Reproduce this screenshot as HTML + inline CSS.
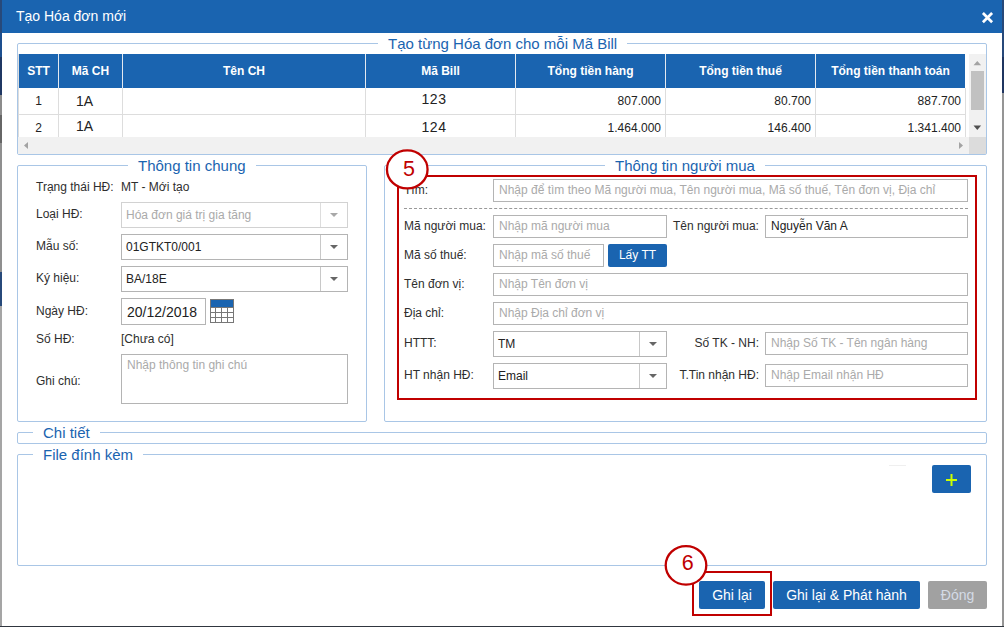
<!DOCTYPE html>
<html lang="vi">
<head>
<meta charset="utf-8">
<title>Tạo Hóa đơn mới</title>
<style>
*{box-sizing:border-box;margin:0;padding:0}
html,body{width:1004px;height:627px;overflow:hidden}
body{position:relative;background:#9b9b9b;font-family:"Liberation Sans",Arial,sans-serif;font-size:12px;color:#222}
.abs{position:absolute}
#bgL{left:0;top:0;width:2px;height:627px;background:linear-gradient(#27497a 0,#27497a 33px,#1d4f8f 33px,#1d4f8f 57px,#1f3763 57px,#1f3763 95px,#8c8c8c 95px,#8c8c8c 115px,#666 115px,#666 143px,#8f8f8f 143px,#8f8f8f 272px,#27497a 272px,#27497a 306px,#a5a5a5 306px,#a5a5a5 627px)}
#bgR{left:1002px;top:0;width:2px;height:627px;background:linear-gradient(#27497a 0,#27497a 57px,#1f3560 57px,#1f3560 93px,#959595 93px,#959595 627px)}
#bot{left:0;top:626px;width:1004px;height:1px;background:#30363f}
#dlg{left:2px;top:0;width:1000px;height:626px;background:#fff}
#title{left:0;top:0;width:1000px;height:33px;background:#1a64b0;color:#fff;font-size:14px;line-height:33px;padding-left:14px}
.fs{position:absolute;border:1px solid #a9c6e6;border-radius:2px}
.lg{position:absolute;background:#fff;color:#1a64b0;font-size:15px;line-height:18px;white-space:nowrap;padding:0 10px}
.lbl{position:absolute;white-space:nowrap;line-height:14px;font-size:12px;color:#2e2e2e}
.inp{position:absolute;border:1px solid #b4b4b4;background:#fff;height:23px;line-height:21px;padding-left:5px;font-size:12px;color:#222;white-space:nowrap;overflow:hidden}
.sel{position:absolute;border:1px solid #b4b4b4;background:#fff;height:26px;line-height:24px;padding-left:4px;font-size:12px;color:#222;white-space:nowrap;overflow:hidden}
.sel i{position:absolute;right:0;top:0;width:27px;height:100%;border-left:1px solid #c8c8c8}
.sel i:after{content:"";position:absolute;left:9px;top:10px;border-left:4px solid transparent;border-right:4px solid transparent;border-top:4px solid #666}
.btn{position:absolute;background:#1a64b0;color:#fff;border-radius:2px;text-align:center;font-size:14px;height:28px;line-height:28px;white-space:nowrap}
.th{position:absolute;top:0;height:34px;line-height:34px;color:#fff;font-weight:bold;font-size:12px;text-align:center;border-right:1px solid #e4e9f0;white-space:nowrap}
.td{position:absolute;height:27px;line-height:27px;font-size:12px;border-right:1px solid #ddd;border-bottom:1px solid #ddd;text-align:center;white-space:nowrap}
.r{text-align:right;padding-right:4px}
.ph{color:#aaa}
.dis i:after{border-top-color:#a8a8a8}
.circ{position:absolute;width:42px;height:42px;border:2px solid #b01217;border-radius:50%;background:#fff;color:#b01217;font-size:20px;line-height:38px;text-align:center}
.rbox{position:absolute;border:2px solid #c00000}
</style>
</head>
<body>
<div class="abs" id="bgL"></div><div class="abs" id="bgR"></div>
<div class="abs" id="dlg">
  <div class="abs" id="title">Tạo Hóa đơn mới</div>
  <svg class="abs" style="left:979px;top:11px" width="14" height="14" viewBox="0 0 14 14"><path d="M1.9 2L11.1 11.2M11.1 2L1.9 11.2" stroke="#fff" stroke-width="2.7" fill="none"/></svg>

  <!-- fieldset 1: table -->
  <div class="fs" style="left:15px;top:43px;width:970px;height:112px"></div>
  <div class="lg" style="left:376px;top:35px">Tạo từng Hóa đơn cho mỗi Mã Bill</div>
  <div class="abs" id="grid" style="left:16px;top:54px;width:951px;height:83px;overflow:hidden;border-left:1px solid #ddd">
    <div class="abs" style="left:0;top:0;width:946px;height:34px;background:#1a64b0"></div>
    <div class="th" style="left:0;width:40px">STT</div>
    <div class="th" style="left:40px;width:64px">Mã CH</div>
    <div class="th" style="left:104px;width:243px">Tên CH</div>
    <div class="th" style="left:347px;width:150px">Mã Bill</div>
    <div class="th" style="left:497px;width:150px">Tổng tiền hàng</div>
    <div class="th" style="left:647px;width:150px">Tổng tiền thuế</div>
    <div class="th" style="left:797px;width:149px;border-right:0">Tổng tiền thanh toán</div>

    <div class="td" style="top:34px;left:0;width:40px">1</div>
    <div class="td" style="top:34px;left:40px;width:64px;font-size:14px;text-align:left;padding-left:17px">1A</div>
    <div class="td" style="top:34px;left:104px;width:243px"></div>
    <div class="td" style="top:34px;left:347px;width:150px;font-size:14px;line-height:22px;padding-right:13px;letter-spacing:.5px">123</div>
    <div class="td r" style="top:34px;left:497px;width:150px">807.000</div>
    <div class="td r" style="top:34px;left:647px;width:150px">80.700</div>
    <div class="td r" style="top:34px;left:797px;width:150px">887.700</div>

    <div class="td" style="top:61px;left:0;width:40px">2</div>
    <div class="td" style="top:61px;left:40px;width:64px;font-size:14px;text-align:left;padding-left:17px;line-height:23px">1A</div>
    <div class="td" style="top:61px;left:104px;width:243px"></div>
    <div class="td" style="top:61px;left:347px;width:150px;font-size:14px;line-height:25px;padding-right:13px;letter-spacing:.5px">124</div>
    <div class="td r" style="top:61px;left:497px;width:150px">1.464.000</div>
    <div class="td r" style="top:61px;left:647px;width:150px">146.400</div>
    <div class="td r" style="top:61px;left:797px;width:150px">1.341.400</div>
  </div>
  <!-- scrollbars -->
  <div class="abs" style="left:967px;top:54px;width:17px;height:83px;background:#f1f1f1"></div>
  <div class="abs" style="left:969px;top:71px;width:13px;height:39px;background:#c1c1c1"></div>
  <svg class="abs" style="left:967px;top:54px" width="17" height="83"><path d="M4.5 11.2L8.3 7L12.1 11.2Z" fill="#a3a3a3"/><path d="M4.5 71.6L8.3 75.9L12.1 71.6Z" fill="#505050"/></svg>
  <div class="abs" style="left:16px;top:137px;width:951px;height:17px;background:#f1f1f1"></div>
  <div class="abs" style="left:967px;top:137px;width:17px;height:17px;background:#dcdcdc"></div>
  <svg class="abs" style="left:16px;top:137px" width="951" height="17"><path d="M10 5L6 8.5L10 12Z" fill="#a3a3a3"/><path d="M941 5L945 8.5L941 12Z" fill="#a3a3a3"/></svg>

  <!-- fieldset 2: Thong tin chung -->
  <div class="fs" style="left:15px;top:165px;width:350px;height:257px"></div>
  <div class="lg" style="left:126px;top:157px">Thông tin chung</div>
  <div class="lbl" style="left:34px;top:180px">Trạng thái HĐ:</div>
  <div class="lbl" style="left:119px;top:180px">MT - Mới tạo</div>
  <div class="lbl" style="left:34px;top:207px">Loại HĐ:</div>
  <div class="sel ph dis" style="left:119px;top:202px;width:227px;border-color:#d2d2d2">Hóa đơn giá trị gia tăng<i style="border-color:#ddd"></i></div>
  <div class="lbl" style="left:34px;top:239px">Mẫu số:</div>
  <div class="sel" style="left:119px;top:234px;width:227px">01GTKT0/001<i></i></div>
  <div class="lbl" style="left:34px;top:271px">Ký hiệu:</div>
  <div class="sel" style="left:119px;top:266px;width:227px">BA/18E<i></i></div>
  <div class="lbl" style="left:34px;top:304px">Ngày HĐ:</div>
  <div class="inp" style="left:119px;top:298px;width:85px;height:27px;line-height:26px;font-size:14px">20/12/2018</div>
  <svg class="abs" style="left:208px;top:299px" width="24" height="24" viewBox="0 0 24 24"><rect x="0.5" y="0.5" width="23" height="23" fill="#fff" stroke="#777"/><rect x="1" y="1" width="22" height="7" fill="#1a64b0"/><path d="M0 8.5H24M0 13.5H24M0 18.5H24M5.5 8V24M11.5 8V24M17.5 8V24" stroke="#777" fill="none"/></svg>
  <div class="lbl" style="left:34px;top:332px">Số HĐ:</div>
  <div class="lbl" style="left:119px;top:332px">[Chưa có]</div>
  <div class="lbl" style="left:34px;top:374px">Ghi chú:</div>
  <div class="inp ph" style="left:119px;top:354px;width:227px;height:50px;line-height:20px">Nhập thông tin ghi chú</div>

  <!-- fieldset 3: Thong tin nguoi mua -->
  <div class="fs" style="left:382px;top:165px;width:603px;height:257px"></div>
  <div class="lg" style="left:603px;top:157px">Thông tin người mua</div>
  <div class="lbl" style="left:402px;top:183px">Tìm:</div>
  <div class="inp ph" style="left:491px;top:179px;width:475px">Nhập để tìm theo Mã người mua, Tên người mua, Mã số thuế, Tên đơn vị, Địa chỉ</div>
  <div class="abs" style="left:402px;top:208px;width:564px;height:0;border-top:1px dashed #999"></div>
  <div class="lbl" style="left:402px;top:219px">Mã người mua:</div>
  <div class="inp ph" style="left:491px;top:215px;width:174px">Nhập mã người mua</div>
  <div class="lbl" style="left:671px;top:219px">Tên người mua:</div>
  <div class="inp" style="left:763px;top:215px;width:203px">Nguyễn Văn A</div>
  <div class="lbl" style="left:402px;top:248px">Mã số thuế:</div>
  <div class="inp ph" style="left:491px;top:244px;width:111px">Nhập mã số thuế</div>
  <div class="btn" style="left:606px;top:244px;width:59px;height:23px;line-height:23px;font-size:12px">Lấy TT</div>
  <div class="lbl" style="left:402px;top:277px">Tên đơn vị:</div>
  <div class="inp ph" style="left:491px;top:273px;width:475px">Nhập Tên đơn vị</div>
  <div class="lbl" style="left:402px;top:306px">Địa chỉ:</div>
  <div class="inp ph" style="left:491px;top:302px;width:475px">Nhập Địa chỉ đơn vị</div>
  <div class="lbl" style="left:402px;top:336px">HTTT:</div>
  <div class="sel" style="left:491px;top:331px;width:174px">TM<i></i></div>
  <div class="lbl" style="left:657px;top:336px;width:100px;text-align:right">Số TK - NH:</div>
  <div class="inp ph" style="left:763px;top:332px;width:203px">Nhập Số TK - Tên ngân hàng</div>
  <div class="lbl" style="left:402px;top:368px">HT nhận HĐ:</div>
  <div class="sel" style="left:491px;top:363px;width:174px">Email<i></i></div>
  <div class="lbl" style="left:657px;top:368px;width:100px;text-align:right">T.Tin nhận HĐ:</div>
  <div class="inp ph" style="left:763px;top:364px;width:203px">Nhập Email nhận HĐ</div>

  <div class="rbox" style="left:395px;top:175px;width:580px;height:225px"></div>
  <svg class="abs" style="left:380px;top:144px" width="52" height="50"><ellipse cx="25.25" cy="25.4" rx="20.3" ry="19" fill="#fff" stroke="#c00000" stroke-width="2.3"/><text x="27.1" y="32.4" text-anchor="middle" font-family="Liberation Sans, Arial, sans-serif" font-size="21.5" fill="#c00000">5</text></svg>

  <!-- Chi tiet -->
  <div class="fs" style="left:15px;top:432px;width:970px;height:12px"></div>
  <div class="lg" style="left:31px;top:423.5px">Chi tiết</div>
  <!-- File dinh kem -->
  <div class="fs" style="left:15px;top:454px;width:970px;height:112px"></div>
  <div class="lg" style="left:31px;top:446px">File đính kèm</div>
  <div class="btn" style="left:930px;top:465px;width:39px;height:28px"></div>
  <svg class="abs" style="left:930px;top:465px" width="39" height="28"><path d="M19.5 9V21M14 15H25" stroke="#ccff00" stroke-width="2" fill="none"/></svg>

  <div class="abs" style="left:887px;top:465px;width:17px;height:1px;background:#efefef"></div>
  <!-- buttons -->
  <div class="btn" style="left:697px;top:581px;width:66px">Ghi lại</div>
  <div class="btn" style="left:771px;top:581px;width:147px">Ghi lại &amp; Phát hành</div>
  <div class="btn" style="left:926px;top:581px;width:59px;background:#a1a1a1;color:#d4dbe6">Đóng</div>
  <div class="rbox" style="left:690px;top:571px;width:80px;height:45px"></div>
  <svg class="abs" style="left:659px;top:540px" width="52" height="50"><ellipse cx="25" cy="25.35" rx="20.3" ry="19.3" fill="#fff" stroke="#c00000" stroke-width="2.3"/><text x="26.7" y="30.4" text-anchor="middle" font-family="Liberation Sans, Arial, sans-serif" font-size="21.5" fill="#c00000">6</text></svg>
</div>
<div class="abs" id="bot"></div>
</body>
</html>
